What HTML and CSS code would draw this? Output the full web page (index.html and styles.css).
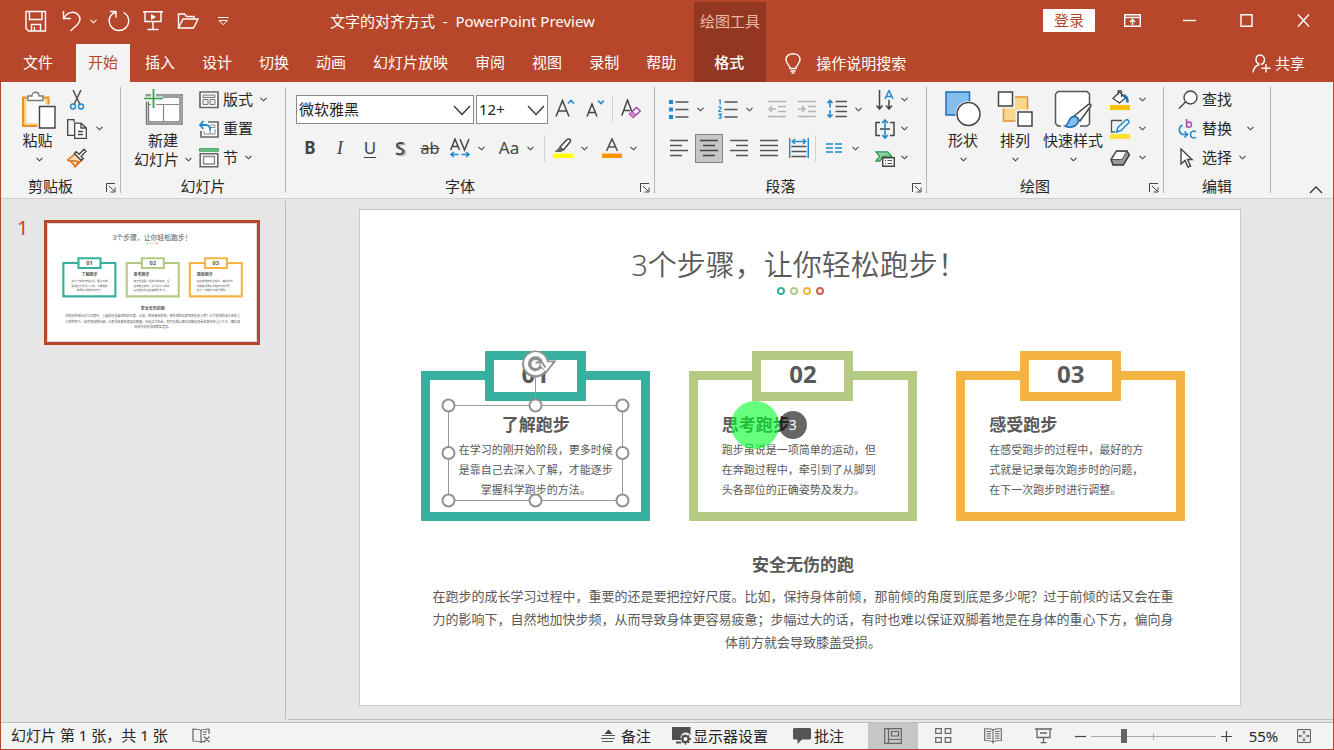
FILE: index.html
```html
<!DOCTYPE html>
<html lang="zh-CN">
<head>
<meta charset="utf-8">
<title>文字的对齐方式 - PowerPoint Preview</title>
<link rel="stylesheet" href="styles.css">
</head>
<body>
<svg class="defs" width="0" height="0" aria-hidden="true">
  <symbol id="chev" viewBox="0 0 7 5"><path d="M.5.8l3 3 3-3" fill="none" stroke="currentColor" stroke-width="1.1"/></symbol>
  <symbol id="bigchev" viewBox="0 0 18 11"><path d="M1 1l8 8.5L17 1" fill="none" stroke="#333" stroke-width="1.3"/></symbol>
  <symbol id="launch" viewBox="0 0 10 10"><path d="M.5 9V.5H9M3 3l5 5M9 4.5V9H4.5" fill="none" stroke="#444" stroke-width="1"/></symbol>
</svg>
<div class="window">
  <header class="head">
    <div class="titlebar">
      <div class="title-left">
        <button class="q q-save" aria-label="保存"><svg width="22" height="22" viewBox="0 0 22 22"><path d="M1 1.500h19.500V21H3.500L1 18.500zM4.500 1.500v8h12.500v-8M6.500 21v-6.500h9V21M9.500 17v4" /></svg></button>
        <button class="q q-undo" aria-label="撤销"><svg width="20" height="22" viewBox="0 0 20 22"><path d="M1.500 1v7.500H9M1.500 8.500C5 2 12 .5 16 4.500c3 3.500 2.500 7-1 10.500l-6.500 6"/></svg><svg class="c" width="7" height="5"><use href="#chev"/></svg></button>
        <button class="q q-redo" aria-label="重复"><svg width="22" height="22" viewBox="0 0 22 22"><path d="M2 1.500h6v6M8 2C3 4 .8 8 1.200 12c.8 5 5 8.500 9.800 8.500S20 17 20.700 12c.4-4-1.700-7.500-5.200-9.500"/></svg></button>
        <button class="q q-show" aria-label="从头开始"><svg width="20" height="22" viewBox="0 0 20 22"><path d="M0 1.800h20M2 2v9.500h16V2M10 11.500V19M4.500 19.500h11"/><path class="solid" d="M8 4l5 3-5 3z"/></svg></button>
        <button class="q q-open" aria-label="打开"><svg width="22" height="18" viewBox="0 0 22 18"><path d="M1.500 16V2h6l2 2.500h7.500V7M1.500 16L6 7h15l-4.500 9z"/></svg></button>
        <button class="q q-more" aria-label="自定义快速访问工具栏"><svg class="fine" width="11" height="9" viewBox="0 0 11 9"><path d="M0 .5h10.500M1 3.500L5.200 7.700 9.500 3.500z"/></svg></button>
        <h1 class="doc-title">文字的对齐方式&nbsp; -&nbsp; PowerPoint Preview</h1>
      </div>
      <div class="ctx-title">绘图工具</div>
      <div class="win-tools">
        <button class="login">登录</button>
        <button class="w w-ribbon" aria-label="功能区显示选项"><svg width="17" height="13" viewBox="0 0 17 13"><path d="M.7.700h15.600v11.600H.7zM.7 3.500h15.600M8.500 11V5.500M6 8l2.500-2.500L11 8"/></svg></button>
        <button class="w" aria-label="最小化"><svg width="13" height="13" viewBox="0 0 13 13"><path d="M0 6.500h13"/></svg></button>
        <button class="w" aria-label="最大化"><svg width="13" height="13" viewBox="0 0 13 13"><path d="M1 .7h11v11.600H1z"/></svg></button>
        <button class="w" aria-label="关闭"><svg width="13" height="13" viewBox="0 0 13 13"><path d="M1 .5l11 12M12 .5l-11 12"/></svg></button>
      </div>
    </div>
    <nav class="tabs">
      <a class="file" href="#file">文件</a>
      <a class="tab on" href="#home">开始</a>
      <a class="tab" href="#insert">插入</a>
      <a class="tab" href="#design">设计</a>
      <a class="tab" href="#transition">切换</a>
      <a class="tab" href="#animation">动画</a>
      <a class="tab" href="#show">幻灯片放映</a>
      <a class="tab" href="#review">审阅</a>
      <a class="tab" href="#view">视图</a>
      <a class="tab" href="#record">录制</a>
      <a class="tab" href="#help">帮助</a>
      <a class="tab ctx" href="#format">格式</a>
      <a class="tell" href="#tell"><svg width="16" height="21" viewBox="0 0 16 21"><path d="M5 15.500c0-3-4-5-4-9C1 3 4 .8 8 .8s7 2.200 7 5.700c0 4-4 6-4 9zM5.500 18h5M6.500 20h3"/></svg>操作说明搜索</a>
      <a class="share" href="#share"><svg width="19" height="19" viewBox="0 0 19 19"><path d="M7.500 10.500C5.500 9.500 4 8 4 5.500 4 3 5.500 1 8 1s4.500 2 4.500 4.500S11 10 9 10.500M7.500 10.500C4 11.500 1.500 14 1 18.500M14 10v8.500M9.500 14.300h9"/></svg>共享</a>
    </nav>
  </header>

  <section class="ribbon" aria-label="开始">
    <div class="group g-clip">
      <div class="gbody">
        <button class="big paste"><svg width="36" height="40" viewBox="0 0 36 40"><path d="M2 6.500h25.500V35H2z" fill="#f8d98b" stroke="#e3922f" stroke-width="2"/><path d="M5.500 9h18.500v23H5.500z" fill="#fafafa"/><path d="M7 9.500V5h4c0-5 7-5 7 0h4v4.500z" fill="#fff" stroke="#777" stroke-width="1.300"/><path d="M18.500 15.500H34V37H18.500z" fill="#fff" stroke="#f3f3f3" stroke-width="4"/><path d="M18.500 15.500H34V37H18.500z" fill="#fff" stroke="#444" stroke-width="1.400"/></svg><span>粘贴</span><svg class="c" width="7" height="5"><use href="#chev"/></svg></button>
        <div class="col">
          <button class="small" aria-label="剪切"><svg width="20" height="20" viewBox="0 0 20 20"><path d="M6 0l7 14.500M14 0L7 14.500" stroke="#555" stroke-width="1.600" fill="none"/><circle cx="6" cy="16.500" r="2.500" fill="none" stroke="#2189d0" stroke-width="1.400"/><circle cx="14" cy="16.500" r="2.500" fill="none" stroke="#2189d0" stroke-width="1.400"/></svg></button>
          <button class="small" aria-label="复制"><svg width="20" height="20" viewBox="0 0 20 20"><path d="M7 3V.7H.7v15.600H7" fill="none" stroke="#444" stroke-width="1.300"/><path d="M7.700 4.200H14L19.300 9v10.300H7.700zM14 4.200V9h5M11 12.500h5M11 15.500h5" fill="#fff" stroke="#444" stroke-width="1.300"/></svg><svg class="c far" width="7" height="5"><use href="#chev"/></svg></button>
          <button class="small" aria-label="格式刷"><svg width="20" height="20" viewBox="0 0 20 20"><path d="M8 6l6.500 6.500L8 19c-2-4-4-6-7.500-7z" fill="#f9e0b0" stroke="#d9701c" stroke-width="1.400"/><path d="M4 12.500l7 1M8 19l4-6" stroke="#d9701c" stroke-width="1.500"/><path d="M7.500 5.500l1.700-1.700 3 2.500L17 1.200l2 2-4.800 5 2 2.500-1.800 1.700z" fill="#fff" stroke="#444" stroke-width="1.400"/></svg></button>
        </div>
      </div>
      <div class="gfoot">剪贴板<button class="launch" aria-label="剪贴板选项"><svg width="10" height="10"><use href="#launch"/></svg></button></div>
    </div>
    <i class="rule"></i>
    <div class="group g-slides">
      <div class="gbody">
        <button class="big newslide"><svg width="40" height="36" viewBox="0 0 40 36"><path d="M4.500 7h33.500v27H4.500z" fill="#fff" stroke="#777" stroke-width="3.400"/><path d="M4.500 7h33.500v27H4.500z" fill="none" stroke="#ddd" stroke-width=".8"/><path d="M6 15.500h30M20.500 15.500V32" stroke="#888" stroke-width="1.200"/><path d="M10.500 0v20M0 10h20" stroke="#f3f3f3" stroke-width="5"/><path d="M10.500 0v19M1 9.500h19" stroke="#2ea44f" stroke-width="1.700"/></svg><span>新建</span><span class="line">幻灯片<svg class="c" width="7" height="5"><use href="#chev"/></svg></span></button>
        <div class="col">
          <button class="small"><svg width="20" height="18" viewBox="0 0 20 18"><path d="M1 1h18v15.500H1z" fill="#fff" stroke="#666" stroke-width="1.700"/><path d="M4 4h12v2.500H4zM4 8.500h5v5H4zM11 8.500h5v5h-5z" fill="#eee" stroke="#777"/></svg><span>版式</span><svg class="c" width="7" height="5"><use href="#chev"/></svg></button>
          <button class="small"><svg width="20" height="18" viewBox="0 0 20 18"><path d="M9 2h10v15H2v-6" fill="#fff" stroke="#666" stroke-width="1.700"/><path d="M11 5h5v2.500h-5M16 9v5H5v-3M11 9v5" fill="none" stroke="#888"/><path d="M1 5h6c3 0 4.500 2.500 4 5.500M4.500 1L1 5l3.500 4" fill="none" stroke="#2189d0" stroke-width="1.800"/></svg><span>重置</span></button>
          <button class="small"><svg width="20" height="20" viewBox="0 0 20 20"><path d="M.5.700h19v2.500H.5z" fill="#7fc796" stroke="#2f9d52"/><path d="M1.200 5.700h17.600v13H1.200z" fill="#fff" stroke="#666" stroke-width="1.600"/><path d="M4.500 8.500h11v7.500h-11z" fill="none" stroke="#888" stroke-width="1.400"/></svg><span>节</span><svg class="c" width="7" height="5"><use href="#chev"/></svg></button>
        </div>
      </div>
      <div class="gfoot">幻灯片</div>
    </div>
    <i class="rule"></i>
    <div class="group g-font">
      <div class="gbody rows">
        <div class="row fields">
          <label class="field name"><select aria-label="字体"><option>微软雅黑</option></select><svg width="18" height="11"><use href="#bigchev"/></svg></label>
          <label class="field size"><select aria-label="字号"><option>12+</option></select><svg width="18" height="11"><use href="#bigchev"/></svg></label>
          <button class="tool grow" aria-label="增大字号"><svg width="20" height="20" viewBox="0 0 20 20"><path d="M1 17.500L7.500 1.500 14 17.500M3.500 12h8" stroke="#444" stroke-width="1.500" fill="none"/><path d="M13 4.500L16 1.500l3 3" stroke="#2189d0" stroke-width="1.700" fill="none"/></svg></button>
          <button class="tool" aria-label="减小字号"><svg width="18" height="20" viewBox="0 0 18 20"><path d="M1 17.500L6 5l5 12.500M3 13.500h6.500" stroke="#444" stroke-width="1.500" fill="none"/><path d="M12 1.500l3 3 3-3" stroke="#2189d0" stroke-width="1.700" fill="none"/></svg></button>
          <i class="vr"></i>
          <button class="tool" aria-label="清除格式"><svg width="20" height="20" viewBox="0 0 20 20"><path d="M.8 16.500L6.500 1l4.500 12M3 11.500h6" stroke="#444" stroke-width="1.500" fill="none"/><path d="M8.500 15l7-6.500L19.300 12l-7 6.500zM11 12.500l3.800 4" fill="#fff" stroke="#a23ca8" stroke-width="1.500"/><path d="M8.500 15l2.500-2.500 3.800 4-2.500 2z" fill="#c68ac9"/></svg></button>
        </div>
        <div class="row">
          <button class="tool t-b">B</button><button class="tool t-i">I</button><button class="tool t-u">U</button><button class="tool t-s">S</button><button class="tool t-ab">ab</button>
          <button class="tool drop" aria-label="字符间距"><span class="face"><svg width="20" height="20" viewBox="0 0 20 20"><path d="M.7 12L5 1l4.500 11M2.300 8.500H8M10 1l4.500 11L19 1" stroke="#444" stroke-width="1.500" fill="none"/><path d="M1 16.500h7.500M4 14l-3 2.500L4 19M11.500 16.500H19M16 14l3 2.500-3 2.500" stroke="#2189d0" stroke-width="1.500" fill="none"/></svg></span><svg class="c" width="7" height="5"><use href="#chev"/></svg></button>
          <button class="tool drop t-aa"><span class="face">Aa</span><svg class="c" width="7" height="5"><use href="#chev"/></svg></button>
          <i class="vr"></i>
          <button class="tool drop" aria-label="文本突出显示颜色"><span class="face"><svg width="20" height="20" viewBox="0 0 20 20"><path d="M7 9l7-7.500c2-1.500 4.500.5 3 2.500l-6.500 8z" fill="#fff" stroke="#444" stroke-width="1.500"/><path d="M6.500 9l4 3.500-2.500 1.500H1.500z" fill="#666"/><path d="M0 15.500h20v4.500H0z" fill="#ff0"/></svg></span><svg class="c" width="7" height="5"><use href="#chev"/></svg></button>
          <button class="tool drop" aria-label="字体颜色"><span class="face"><svg width="20" height="20" viewBox="0 0 20 20"><path d="M4.500 13L10 .8 15.500 13M6.500 9h7" stroke="#555" stroke-width="1.600" fill="none"/><path d="M0 15.500h20v4.500H0z" fill="#ff9300"/></svg></span><svg class="c" width="7" height="5"><use href="#chev"/></svg></button>
        </div>
      </div>
      <div class="gfoot">字体<button class="launch" aria-label="字体选项"><svg width="10" height="10"><use href="#launch"/></svg></button></div>
    </div>
    <i class="rule"></i>
    <div class="group g-para">
      <div class="gbody">
        <div class="rows">
          <div class="row">
            <button class="tool drop" aria-label="项目符号"><span class="face"><svg width="20" height="20" viewBox="0 0 20 20"><path d="M0 1h4v4H0zM0 8.500h4v4H0zM0 16h4v4H0z" fill="#2189d0"/><path d="M6.500 3h13M6.500 10.500h13M6.500 18h13" stroke="#555" stroke-width="1.500"/></svg></span><svg class="c" width="7" height="5"><use href="#chev"/></svg></button>
            <button class="tool drop" aria-label="编号"><span class="face"><svg width="20" height="20" viewBox="0 0 20 20"><path d="M.8 1.500L2.200 1v4.500M.5 8.500c1-1 3-.5 2.300 1L.8 12.500h2.500M.5 15.200h2.700l-1.400 1.600c2 0 2 2.500 0 2.700H.5" fill="none" stroke="#2189d0" stroke-width="1.200"/><path d="M6.500 3h13M6.500 10.500h13M6.500 18h13" stroke="#555" stroke-width="1.500"/></svg></span><svg class="c" width="7" height="5"><use href="#chev"/></svg></button>
            <button class="tool" aria-label="减少缩进"><svg width="18" height="18" viewBox="0 0 18 18"><path d="M0 1.500h18M10 6.500h8M10 11.500h8M0 16.500h18M8 9H1M4 6L1 9l3 3" fill="none" stroke="#b3b3b3" stroke-width="1.500"/></svg></button>
            <button class="tool" aria-label="增加缩进"><svg width="18" height="18" viewBox="0 0 18 18"><path d="M0 1.500h18M10 6.500h8M10 11.500h8M0 16.500h18M0 9h7M4 6l3 3-3 3" fill="none" stroke="#b3b3b3" stroke-width="1.500"/></svg></button>
            <button class="tool drop" aria-label="行距"><span class="face"><svg width="20" height="20" viewBox="0 0 20 20"><path d="M3 1.500v7M.5 4L3 1.500 5.500 4M3 11v7M.5 15.500L3 18l2.500-2.500" fill="none" stroke="#2189d0" stroke-width="1.600"/><path d="M8.500 2.500H20M8.500 7.500H20M8.500 12.500H20M8.500 17.500H20" stroke="#555" stroke-width="1.600"/></svg></span><svg class="c" width="7" height="5"><use href="#chev"/></svg></button>
          </div>
          <div class="row">
            <button class="tool" aria-label="左对齐"><svg width="18" height="18" viewBox="0 0 18 18"><path d="M0 1.500h18M0 6.500h12M0 11.500h18M0 16.500h12" stroke="#555" stroke-width="1.500"/></svg></button>
            <button class="tool pressed" aria-label="居中" aria-pressed="true"><svg width="18" height="18" viewBox="0 0 18 18"><path d="M0 1.500h18M3 6.500h12M0 11.500h18M3 16.500h12" stroke="#444" stroke-width="1.500"/></svg></button>
            <button class="tool" aria-label="右对齐"><svg width="18" height="18" viewBox="0 0 18 18"><path d="M0 1.500h18M6 6.500h12M0 11.500h18M6 16.500h12" stroke="#555" stroke-width="1.500"/></svg></button>
            <button class="tool" aria-label="两端对齐"><svg width="18" height="18" viewBox="0 0 18 18"><path d="M0 1.500h18M0 6.500h18M0 11.500h18M0 16.500h18" stroke="#555" stroke-width="1.500"/></svg></button>
            <button class="tool" aria-label="分散对齐"><svg width="20" height="20" viewBox="0 0 20 20"><path d="M.7 0v20M19.300 0v20M3 3.500h14M6 1L3.300 3.500 6 6M14 1l2.700 2.500L14 6" fill="none" stroke="#2189d0" stroke-width="1.500"/><path d="M2.500 8.500h15M2.500 13.500h15M2.500 18.500h15" stroke="#555" stroke-width="1.500"/></svg></button>
            <i class="vr"></i>
            <button class="tool drop" aria-label="分栏"><span class="face"><svg width="16" height="10" viewBox="0 0 16 10"><path d="M0 1h7M9 1h7M0 5h7M9 5h7M0 9h7M9 9h7" stroke="#2189d0" stroke-width="1.400"/></svg></span><svg class="c" width="7" height="5"><use href="#chev"/></svg></button>
          </div>
        </div>
        <div class="col">
          <button class="small" aria-label="文字方向"><svg width="20" height="20" viewBox="0 0 20 20"><path d="M4.500 0v18.500M1.500 15.500l3 3.500 3-3.500M14 10v8.500M11 15.500l3 3.500 3-3.500" fill="none" stroke="#444" stroke-width="1.500"/><path d="M10 9L14 .500 18 9M11.500 6.500h5" fill="none" stroke="#2189d0" stroke-width="1.500"/></svg><svg class="c" width="7" height="5"><use href="#chev"/></svg></button>
          <button class="small" aria-label="对齐文本"><svg width="20" height="20" viewBox="0 0 20 20"><path d="M5 3.500H1v13h4M15 3.500h4v13h-4M5 10h10" fill="none" stroke="#444" stroke-width="1.500"/><path d="M10 1v18M7 4l3-3 3 3M7 16l3 3 3-3" fill="none" stroke="#2189d0" stroke-width="1.600"/></svg><svg class="c" width="7" height="5"><use href="#chev"/></svg></button>
          <button class="small" aria-label="转换为 SmartArt"><svg width="20" height="18" viewBox="0 0 20 18"><path d="M.8 2.800h12l4 4.700H8l-3 4.500H.8l4-4.500z" fill="#8fd0a2" stroke="#2f9d52" stroke-width="1.300"/><path d="M7.700 8.700h11.600v8.600H7.700z" fill="#fff" stroke="#444" stroke-width="1.400"/><path d="M10 11.500h1M12.500 11.500H17M10 14.500h1M12.500 14.500H17" stroke="#555"/></svg><svg class="c" width="7" height="5"><use href="#chev"/></svg></button>
        </div>
      </div>
      <div class="gfoot">段落<button class="launch" aria-label="段落选项"><svg width="10" height="10"><use href="#launch"/></svg></button></div>
    </div>
    <i class="rule"></i>
    <div class="group g-draw">
      <div class="gbody">
        <button class="big"><svg width="36" height="40" viewBox="0 0 36 40"><path d="M1 3h23.500v23H1z" fill="#83beec" stroke="#1a6fb8" stroke-width="1.500"/><circle cx="23.500" cy="25" r="13" fill="#f3f3f3"/><circle cx="23.500" cy="25" r="11.500" fill="#fff" stroke="#444" stroke-width="1.500"/></svg><span>形状</span><svg class="c" width="7" height="5"><use href="#chev"/></svg></button>
        <button class="big"><svg width="36" height="40" viewBox="0 0 36 40"><path d="M6.500 8h24v24h-24z" fill="#f8d98b" stroke="#e3922f" stroke-width="1.500"/><path d="M1 2.500h15v15H1zM20.500 22.500h15v15h-15z" fill="#fff" stroke="#f3f3f3" stroke-width="4"/><path d="M1.500 3h14v14h-14zM21 23h14v14H21z" fill="#fff" stroke="#444" stroke-width="1.500"/></svg><span>排列</span><svg class="c" width="7" height="5"><use href="#chev"/></svg></button>
        <button class="big styles"><svg width="40" height="40" viewBox="0 0 40 40"><path d="M8 37H5l-2.500-2.500V5L5 2.500h29L36.500 5v30L34 37H27" fill="#fff" stroke="#555" stroke-width="1.500"/><path d="M21 27L35.500 15.500c2.500-1 3 .5 2 2L27 32z" fill="#fff" stroke="#444" stroke-width="1.500"/><path d="M12 37c4-1 3-8 8-9.500 5-.5 7 3.500 4.500 7-3 4-8.500 4.500-12.500 2.500z" fill="#83beec" stroke="#1a6fb8" stroke-width="1.500"/></svg><span>快速样式</span><svg class="c" width="7" height="5"><use href="#chev"/></svg></button>
        <div class="col">
          <button class="small" aria-label="形状填充"><svg width="20" height="20" viewBox="0 0 20 20"><path d="M3 8.500L9.500 2l6 6-6 5zM8 5V1.500C8.500 0 11.500 0 11.500 2v5" fill="#fff" stroke="#444" stroke-width="1.300"/><path d="M13 5.500c3 0 4.500 2.500 4.500 7" fill="none" stroke="#1a6fb8" stroke-width="2.500"/><path d="M0 15h20v5H0z" fill="#ffc000"/></svg><svg class="c" width="7" height="5"><use href="#chev"/></svg></button>
          <button class="small" aria-label="形状轮廓"><svg width="20" height="20" viewBox="0 0 20 20"><path d="M12 1.500H1.500V13H5" fill="none" stroke="#555" stroke-width="1.300"/><path d="M6.500 13L8 8.500 15.500 1c2-1 4.500 1 3 3L11 11.500z" fill="#fff" stroke="#2189d0" stroke-width="1.500"/><path d="M0 15h20v5H0z" fill="#ffe135"/></svg><svg class="c" width="7" height="5"><use href="#chev"/></svg></button>
          <button class="small" aria-label="形状效果"><svg width="20" height="18" viewBox="0 0 20 18"><path d="M1 10.500L6.500 2H17l2.300 4-6 10H3z" fill="#999" stroke="#333" stroke-width="1.400"/><path d="M1.500 10.500L6.500 2.500h10L12 10.500z" fill="#fff" stroke="#555"/></svg><svg class="c" width="7" height="5"><use href="#chev"/></svg></button>
        </div>
      </div>
      <div class="gfoot">绘图<button class="launch" aria-label="绘图选项"><svg width="10" height="10"><use href="#launch"/></svg></button></div>
    </div>
    <i class="rule"></i>
    <div class="group g-edit">
      <div class="gbody">
        <div class="col">
          <button class="small"><svg width="20" height="20" viewBox="0 0 20 20"><circle cx="12.500" cy="7.500" r="6.500" fill="#fff" stroke="#444" stroke-width="1.400"/><path d="M7.500 12L1 18.500" stroke="#444" stroke-width="1.500"/></svg><span>查找</span></button>
          <button class="small"><svg width="20" height="20" viewBox="0 0 20 20"><path d="M8.500 0v8.500M8.500 5.500c0-3.500 5-3.500 5 0s-5 3.500-5 0" fill="none" stroke="#b146b8" stroke-width="1.500"/><path d="M18 13c-2.500-2-5.500-.5-5.500 2.500s3 4.500 5.500 2.500M4.500 6C.5 8 0 13.500 4.500 15.500H9M6.500 12.500l3 3-3 3" fill="none" stroke="#2189d0" stroke-width="1.600"/></svg><span>替换</span><svg class="c far" width="7" height="5"><use href="#chev"/></svg></button>
          <button class="small"><svg width="20" height="20" viewBox="0 0 20 20"><path d="M3 1l11 10.500H9.500l3 6.500-2.500 1-3-6.500L3 16z" fill="#fff" stroke="#444" stroke-width="1.400"/></svg><span>选择</span><svg class="c" width="7" height="5"><use href="#chev"/></svg></button>
        </div>
      </div>
      <div class="gfoot">编辑</div>
    </div>
    <i class="rule"></i>
    <button class="collapse" aria-label="折叠功能区"><svg width="14" height="8" viewBox="0 0 14 8"><path d="M1 7l6-6 6 6" fill="none" stroke="#333" stroke-width="1.300"/></svg></button>
  </section>

  <main class="work">
    <aside class="pane">
      <span class="num">1</span>
      <a class="thumb" href="#slide1" aria-label="幻灯片 1">
        <svg viewBox="0 0 880 496">
          <rect width="880" height="496" fill="#fff"/>
          <text class="tt" x="440" y="68">3个步骤，让你轻松跑步！</text>
          <g fill="none" stroke-width="2"><circle cx="421" cy="82" r="3" stroke="#36b19f"/><circle cx="434" cy="82" r="3" stroke="#b4c981"/><circle cx="447" cy="82" r="3" stroke="#f2b544"/><circle cx="460" cy="82" r="3" stroke="#d0614f"/></g>
          <g fill="#fff" stroke-width="9">
            <g stroke="#36b19f"><path d="M65 165h220v141H65z"/><path d="M129 145h93v41h-93z"/></g>
            <g stroke="#b4c981"><path d="M333 165h220v141H333z"/><path d="M397 145h93v41h-93z"/></g>
            <g stroke="#f2b544"><path d="M600 165h220v141H600z"/><path d="M664 145h93v41h-93z"/></g>
          </g>
          <g class="tn"><text x="176" y="174">01</text><text x="443" y="174">02</text><text x="710" y="174">03</text></g>
          <g class="th"><text class="mid" x="176" y="222">了解跑步</text><text x="362" y="222">思考跑步</text><text x="629" y="222">感受跑步</text><text class="mid" x="443" y="362">安全无伤的跑</text></g>
          <g class="tp mid"><text x="176" y="245">在学习的刚开始阶段，更多时候</text><text x="176" y="265">是靠自己去深入了解，才能逐步</text><text x="176" y="285">掌握科学跑步的方法。</text></g>
          <g class="tp"><text x="362" y="245">跑步虽说是一项简单的运动，但</text><text x="362" y="265">在奔跑过程中，牵引到了从脚到</text><text x="362" y="285">头各部位的正确姿势及发力。</text><text x="629" y="245">在感受跑步的过程中，最好的方</text><text x="629" y="265">式就是记录每次跑步时的问题，</text><text x="629" y="285">在下一次跑步时进行调整。</text></g>
          <g class="tl mid"><text x="443" y="394">在跑步的成长学习过程中，重要的还是要把控好尺度。比如，保持身体前倾，那前倾的角度到底是多少呢？过于前倾的话又会在重</text><text x="443" y="417">力的影响下，自然地加快步频，从而导致身体更容易疲惫；步幅过大的话，有时也难以保证双脚着地是在身体的重心下方，偏向身</text><text x="443" y="440">体前方就会导致膝盖受损。</text></g>
        </svg>
      </a>
    </aside>
    <section class="stage">
      <article class="slide" id="slide1">
        <h2>3个步骤，让你轻松跑步！</h2>
        <div class="dots"><i class="teal"></i><i class="green"></i><i class="amber"></i><i class="red"></i></div>
        <div class="cards">
          <section class="card teal">
            <div class="no">01</div>
            <div class="txt center">
              <h3>了解跑步</h3>
              <p>在学习的刚开始阶段，更多时候是靠自己去深入了解，才能逐步掌握科学跑步的方法。</p>
              <svg class="sel" width="175" height="96" viewBox="0 0 175 96">
                <path d="M.5.5h174v95H.5zM87.500.500V-29" fill="none" stroke="#999"/>
                <g fill="#fff" stroke="#919191" stroke-width="2"><circle cx=".5" cy=".5" r="6"/><circle cx="87.500" cy=".5" r="6"/><circle cx="174.500" cy=".5" r="6"/><circle cx=".5" cy="48" r="6"/><circle cx="174.500" cy="48" r="6"/><circle cx=".5" cy="95.500" r="6"/><circle cx="87.500" cy="95.500" r="6"/><circle cx="174.500" cy="95.500" r="6"/></g>
                <path d="M96-36.500A9.500 9.500 0 1 1 97-42" fill="none" stroke="#919191" stroke-width="8"/>
                <path d="M88-43.500h18.500L97.500-32z" fill="#fff" stroke="#919191" stroke-width="2"/>
                <path d="M95-35.500A9.500 9.500 0 1 1 97-41.500" fill="none" stroke="#fff" stroke-width="4"/>
                <circle cx="87.500" cy="-41" r="5" fill="#fff" stroke="#919191" stroke-width="2"/>
                <path d="M91-42.500h13L97.500-34z" fill="#fff"/>
                <path d="M87.500-42.500h6.500l3.500 5" fill="none" stroke="#919191" stroke-width="2"/>
              </svg>
            </div>
          </section>
          <section class="card green">
            <div class="no">02</div>
            <div class="txt">
              <h3>思考跑步</h3>
              <p>跑步虽说是一项简单的运动，但在奔跑过程中，牵引到了从脚到头各部位的正确姿势及发力。</p>
              <span class="click"></span><span class="count">3</span>
            </div>
          </section>
          <section class="card amber">
            <div class="no">03</div>
            <div class="txt">
              <h3>感受跑步</h3>
              <p>在感受跑步的过程中，最好的方式就是记录每次跑步时的问题，在下一次跑步时进行调整。</p>
            </div>
          </section>
        </div>
        <div class="summary">
          <h3>安全无伤的跑</h3>
          <p>在跑步的成长学习过程中，重要的还是要把控好尺度。比如，保持身体前倾，那前倾的角度到底是多少呢？过于前倾的话又会在重力的影响下，自然地加快步频，从而导致身体更容易疲惫；步幅过大的话，有时也难以保证双脚着地是在身体的重心下方，偏向身体前方就会导致膝盖受损。</p>
        </div>
      </article>
    </section>
  </main>

  <footer class="status">
    <span class="pos">幻灯片 第 1 张，共 1 张</span>
    <button class="s spell" aria-label="拼写检查"><svg width="19" height="16" viewBox="0 0 19 16"><path d="M9 14V2.500C7 1 3.500 1 1 1v12c3 0 6 0 8 1.500M9 2.500C11 1 14.500 1 17 1v5M9 14.500c1-.7 2-1 3-1M12 8.500l5.500 5.500M17.500 8.500L12 14M11 4h4M11 6.500h3" fill="none" stroke="#666" stroke-width="1.200"/></svg></button>
    <button class="s notes"><svg width="15" height="14" viewBox="0 0 15 14"><path d="M3.500 5L7.500.500 11.500 5z" fill="#444"/><path d="M1 6.500h13M0 9.500h13.500M1 12.500h11" stroke="#555" stroke-width="1.200"/></svg>备注</button>
    <button class="s display"><svg width="19" height="18" viewBox="0 0 19 18"><path d="M0 0h18.500v8.500A5 5 0 0 0 9 13H0z" fill="#505050"/><circle cx="13.500" cy="12" r="3" fill="none" stroke="#505050" stroke-width="2"/><path d="M13.500 7.500v2M13.500 14.500v3M8.500 12h2M16.500 12h2.500M10 8.500l1.500 1.500M15.500 14l1.700 1.700M17 8.500L15.500 10M10 15.500l1.500-1.500M4 15.500h5" stroke="#505050" stroke-width="1.800"/></svg>显示器设置</button>
    <button class="s comment"><svg width="18" height="16" viewBox="0 0 18 16"><path d="M1 0h16l1 1v9.500l-1 1H9L4.500 16v-4.500H1l-1-1V1z" fill="#555"/></svg>批注</button>
    <div class="views">
      <button class="s v on" aria-label="普通视图"><svg width="18" height="16" viewBox="0 0 18 16"><path d="M.7.700h16.600v14.600H.7zM4.500.700v14.600M4.500 11.500h13M7.500 3.500h7v4.500h-7z" fill="none" stroke="#666" stroke-width="1.200"/></svg></button>
      <button class="s v" aria-label="幻灯片浏览"><svg width="17" height="16" viewBox="0 0 17 16"><path d="M.7.700h5.600v4.600H.7zM10.200.700h5.600v4.600h-5.600zM.7 9.700h5.600v4.600H.7zM10.200 9.700h5.600v4.600h-5.600z" fill="none" stroke="#666" stroke-width="1.200"/></svg></button>
      <button class="s v" aria-label="阅读视图"><svg width="18" height="16" viewBox="0 0 18 16"><path d="M9 2v13.500M9 2C7 .500 4 .700.700.700V12.500C4 12.500 7 12.500 9 14M9 2C11 .500 14 .700 17.300.700V12.500C14 12.500 11 12.500 9 14M2.500 3.500H7M2.500 5.700H7M2.500 8H7M2.500 10.300H7M11 3.500h4.500M11 5.700h4.500M11 8h4.500M11 10.300h4.500" fill="none" stroke="#666" stroke-width="1.100"/></svg></button>
      <button class="s v" aria-label="幻灯片放映"><svg width="17" height="16" viewBox="0 0 17 16"><path d="M0 1h17M2 1v8.500h13V1M5 5h7M8.500 9.500V14.500M5.500 14.700h6" fill="none" stroke="#666" stroke-width="1.300"/></svg></button>
    </div>
    <div class="zoom">
      <button class="s z" aria-label="缩小"><svg width="11" height="11" viewBox="0 0 11 11"><path d="M0 5.500h11" stroke="#444" stroke-width="1.200"/></svg></button>
      <input type="range" min="0" max="100" value="25" aria-label="显示比例">
      <button class="s z" aria-label="放大"><svg width="11" height="11" viewBox="0 0 11 11"><path d="M0 5.500h11M5.500 0v11" stroke="#444" stroke-width="1.200"/></svg></button>
      <button class="s pct">55%</button>
      <button class="s fit" aria-label="适应窗口"><svg width="14" height="14" viewBox="0 0 14 14"><path d="M.6.600h12.800v12.800H.6zM7 2v3.500M5.500 3.500L7 2l1.500 1.500M7 12V8.500M5.500 10.500L7 12l1.500-1.500M2 7h3.500M3.500 5.500L2 7l1.500 1.500M12 7H8.500M10.500 5.500L12 7l-1.500 1.500" fill="none" stroke="#555" stroke-width="1"/></svg></button>
    </div>
  </footer>
</div>
</body>
</html>
```
FILE: styles.css
```css
* { box-sizing: border-box; }
html, body { height: 100%; }
body {
  margin: 0;
  font: 15px/20px "Noto Sans", "Noto Sans CJK SC", sans-serif;
  color: #262626;
}
button {
  margin: 0; padding: 0; border: 0; background: none;
  font: inherit; color: inherit;
}
a { color: inherit; text-decoration: none; }
h1, h2, h3, p { margin: 0; font-weight: 400; }
svg { flex: none; display: block; }
.defs { position: absolute; }
.window {
  min-height: 100vh; display: flex; flex-direction: column;
  border: solid #b7472a; border-width: 0 1px 1px;
  background: #e6e6e6;
}

/* title bar and tabs */
.head { background: #b7472a; color: #fff; }
.head svg { fill: none; stroke: #fff; stroke-width: 1.4; }
.head svg.fine { stroke-width: 1; }
.titlebar { display: flex; height: 44px; }
.title-left { width: 693px; display: flex; align-items: center; padding: 0 0 2px 24px; flex: none; }
.q { display: flex; align-items: center; }
.q .c { color: #fff; }
.q .solid { fill: #fff; stroke: none; }
.q-undo { margin-left: 15px; gap: 8px; }
.q-redo { margin-left: 11px; }
.q-show { margin-left: 13px; }
.q-open { margin-left: 14px; }
.q-more { margin-left: 19px; }
.doc-title { font-size: 15px; line-height: 20px; margin-left: 101px; white-space: nowrap; }
.ctx-title {
  width: 72px; flex: none; margin-top: 2px; background: #933720;
  color: #f0b8a4; text-align: center; line-height: 38px;
}
.win-tools { flex: 1; display: flex; align-items: center; justify-content: flex-end; padding: 0 23px 4px 0; }
.login { width: 52px; height: 23px; background: #fff; color: #b7472a; border-radius: 1px; line-height: 22px; }
.w { margin-left: 44px; }
.w-ribbon { margin-left: 29px; }
.w-ribbon + .w { margin-left: 42px; }
.tabs { display: flex; height: 38px; line-height: 37px; white-space: nowrap; }
.file { width: 75px; padding-left: 22px; flex: none; }
.tab { padding: 0 12px; margin-right: 3px; flex: none; }
.tab.on { background: #f3f3f3; color: #b7472a; }
.tab.ctx { width: 72px; margin: 0 0 0 3px; padding: 0 2px 0 0; text-align: center; background: #933720; font-weight: 500; }
.tell { display: flex; align-items: center; gap: 15px; margin-left: 19px; }
.share { display: flex; align-items: center; gap: 4px; margin-left: auto; padding-right: 28px; }

/* ribbon */
.ribbon { display: flex; height: 117px; background: #f3f3f3; border-bottom: 1px solid #d0d0d0; }
.rule { width: 1px; flex: none; margin: 5px 0; background: #b5b5b5; }
.group { display: flex; flex-direction: column; flex: none; padding-top: 3px; }
.gbody { flex: 1; display: flex; align-items: flex-start; }
.gfoot { position: relative; text-align: center; height: 22px; line-height: 20px; }
.launch { position: absolute; right: 4px; top: 7px; }
.c { color: #444; }
.g-clip { width: 119px; }
.g-slides { width: 164px; }
.g-font { width: 368px; }
.g-para { width: 271px; }
.g-draw { width: 236px; }
.g-edit { width: 106px; }
.g-clip .gfoot { padding-right: 20px; }
.g-para .gfoot { padding-right: 20px; }
.g-font .gfoot { padding-right: 20px; }
.g-draw .gfoot { padding-right: 20px; }
.big {
  display: flex; flex-direction: column; align-items: center;
  padding-top: 4px; line-height: 19px; flex: none;
}
.big > .c { margin-top: 7px; }
.big > svg:first-child { margin-bottom: 2px; }
.line { display: flex; align-items: center; gap: 6px; }
.col { display: flex; flex-direction: column; align-items: flex-start; }
.small { display: flex; align-items: center; height: 29px; gap: 4px; white-space: nowrap; }
.small span { padding-bottom: 2px; }
.small .c { margin-left: 3px; }
.paste { width: 38px; margin-left: 19px; padding-top: 6px; }
.paste > svg:first-child { margin-bottom: 0; }
.paste span { padding-right: 3px; }
.g-clip .col { margin-left: 9px; }
.small .c.far { margin-left: 5px; }
.newslide { width: 60px; margin-left: 12px; }
.newslide > svg:first-child { margin-bottom: 6px; }
.g-slides .col { margin-left: 6px; }

.row { display: flex; align-items: center; height: 30px; }
.rows { flex-direction: column; padding-top: 9px; }
.rows .row + .row { margin-top: 9px; }
.g-font .rows { padding-left: 9px; }
.g-para .rows { padding-left: 9px; width: 214px; }
.g-para .col { margin-left: 6px; }
.g-para .small { gap: 3px; }
.tool { width: 30px; height: 29px; flex: none; display: flex; align-items: center; justify-content: center; color: #444; }
.tool.drop { width: 44px; margin-right: 5px; justify-content: flex-start; }
.tool.drop .c { margin-left: 3px; }
.face { width: 30px; display: flex; justify-content: center; }
.pressed { width: 28px; margin: 0 1px; background: #c6c6c6; border: 1px solid #868686; }
.vr { width: 1px; height: 27px; flex: none; background: #d0d0d0; margin: 0 3px 0 1px; }
.fields { padding-left: 1px; gap: 2px; }
.fields .tool { width: 28px; }
.fields .vr { margin: 0 2px 0 1px; }
.fields .tool.grow { margin-left: 1px; }
.field { position: relative; height: 29px; flex: none; }
.field.name { width: 178px; }
.field.size { width: 72px; }
.field select {
  appearance: none; width: 100%; height: 29px; padding: 0 2px;
  border: 1px solid #8a8a8a; border-radius: 0; background: #fff;
  font: inherit; color: #222;
}
.field svg { position: absolute; right: 3px; top: 10px; pointer-events: none; }
.t-b { font-weight: 700; font-size: 17px; }
.t-i { font-family: "Liberation Serif", serif; font-style: italic; font-size: 19px; }
.t-u { text-decoration: underline; text-underline-offset: 3px; font-size: 17px; }
.t-s { font-size: 18px; text-shadow: 2px 1px 1px #aaa; font-weight: 500; }
.t-ab { text-decoration: line-through; font-size: 16px; }
.t-aa { font-size: 17px; }

.g-draw .gbody { padding-left: 10px; }
.g-draw .big { width: 52px; }
.g-draw .big.styles { width: 64px; }
.g-draw .col { margin-left: 5px; }
.g-draw .small { gap: 6px; }
.g-edit .gbody { padding-left: 14px; }
.g-edit .small .c.far { margin-left: 11px; }
.collapse { margin: auto 10px 4px auto; }

/* work area */
.work { flex: 1; display: flex; border-bottom: 1px solid #bdbdbd; }
.pane { width: 285px; flex: none; display: flex; align-items: flex-start; border-right: 1px solid #bababa; margin: 2px 0 3px; padding: 19px 25px 0 16px; }
.num { width: 27px; color: #cc432a; font-size: 20px; line-height: 16px; }
.thumb { flex: 1; background: #dedede; border: 3px solid #b7472a; padding: 1px; }
.thumb svg { width: 100%; height: auto; font-family: "Noto Sans", "Noto Sans CJK SC", sans-serif; fill: #595959; }
.tt { font-size: 29px; text-anchor: middle; }
.tn { font-size: 24px; font-weight: 700; text-anchor: middle; }
.th { font-size: 17px; font-weight: 700; }
.tp { font-size: 11px; }
.tl { font-size: 13px; }
.mid { text-anchor: middle; }
.stage { flex: 1; margin: 0 0 2px 2px; padding: 10px 92px 13px 71px; border-bottom: 1px solid #bdbdbd; }

.slide {
  min-height: 497px; background: #fff; border: 1px solid #c6c6c6;
  color: #595959; padding: 35px 55px 0 61px;
}
.slide h2 { font-size: 29px; line-height: 40px; font-weight: 350; text-align: center; margin-right: 8px; }
.dots { display: flex; justify-content: center; gap: 5px; margin: 2px 6px 0 0; }
.dots i { width: 8px; height: 8px; border-radius: 50%; border: 2px solid var(--c); }
.teal { --c: #36b19f; }
.green { --c: #b4c981; }
.amber { --c: #f2b544; }
.red { --c: #d0614f; }
.cards { display: grid; grid-template-columns: repeat(3, 1fr); gap: 39px; margin-top: 76px; }
.card { border: 9px solid var(--c); padding: 0 18px 11px; }
.no {
  width: 101px; height: 50px; margin: -29px auto 4px;
  border: 9px solid var(--c); background: #fff;
  text-align: center; font-size: 24px; line-height: 28px; font-weight: 700;
}
.txt { position: relative; height: 96px; padding: 5px 5px 0 6px; font-size: 11px; line-height: 20px; }
.txt h3 { font-size: 17px; line-height: 30px; font-weight: 700; }
.center { text-align: center; }
.sel { position: absolute; left: 0; top: 0; overflow: visible; }
.click, .count { position: absolute; border-radius: 50%; }
.click { left: 15px; top: -4px; width: 48px; height: 48px; background: rgba(0, 255, 40, .6); }
.count {
  left: 63px; top: 6px; width: 28px; height: 28px; background: rgba(0, 0, 0, .6);
  color: #fff; font-size: 14px; line-height: 28px; text-align: center;
}
.summary { margin-top: 32px; text-align: center; font-size: 13px; line-height: 23px; padding: 0 6px; }
.summary h3 { font-size: 17px; line-height: 24px; font-weight: 700; margin-bottom: 8px; }

/* status bar */
.status { display: flex; align-items: stretch; height: 26px; background: #f3f3f3; white-space: nowrap; line-height: 25px; }
.s { display: flex; align-items: center; justify-content: center; }
.pos { width: 181px; padding-left: 10px; flex: none; }
.spell { margin-left: 10px; }
.notes { margin-left: auto; gap: 5px; }
.display { margin-left: 21px; gap: 2px; }
.comment { margin-left: 25px; gap: 3px; }
.views { display: flex; margin-left: 24px; }
.v { width: 50px; }
.v.on { background: #c6c6c6; }
.zoom { display: flex; align-items: center; margin-left: 2px; padding-right: 22px; }
.z { width: 21px; }
.zoom input {
  appearance: none; width: 125px; height: 20px; margin: 0;
  background:
    linear-gradient(#aaa, #aaa) 62px 50% / 1px 7px no-repeat,
    linear-gradient(#aaa, #aaa) 0 50% / 100% 1px no-repeat;
}
.zoom input::-webkit-slider-thumb { appearance: none; width: 6px; height: 14px; background: #666; }
.pct { width: 45px; padding-left: 8px; }
.fit { margin-left: 15px; }
```
